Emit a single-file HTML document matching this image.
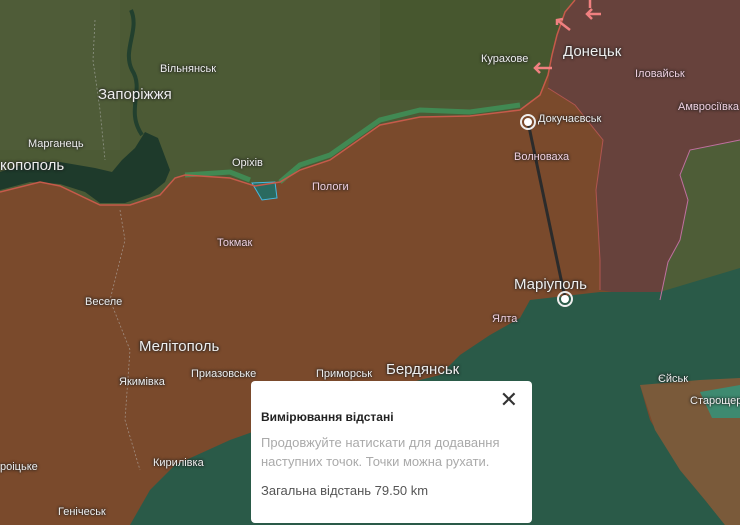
<!DOCTYPE html>
<html><head><meta charset="utf-8"><style>
html,body{margin:0;padding:0;width:740px;height:525px;overflow:hidden;background:#4b5a34}
.l{position:absolute;font-family:"Liberation Sans","DejaVu Sans",sans-serif;color:#eee;font-size:11px;white-space:nowrap;text-shadow:0 0 2px #222,0 0 3px #222}
.b{font-size:15px}
.p{color:#f0d0e0}
.pop{position:absolute;left:251px;top:381px;width:281px;height:142px;background:#fff;border-radius:4px;font-family:"Liberation Sans","DejaVu Sans",sans-serif}
</style></head><body>
<svg width="740" height="525" style="position:absolute;left:0;top:0">
<rect width="740" height="525" fill="#4c5a35"/>
<rect x="380" y="0" width="180" height="100" fill="#47572f"/>
<rect x="0" y="0" width="120" height="150" fill="#4f5c38"/>
<!-- occupied brown -->
<polygon fill="#7a4a2c" points="0,192 40,182 60,186 100,205 130,205 160,195 175,178 185,175 230,178 255,186 280,182 300,170 330,160 380,125 420,117 470,116 520,110 540,95 548,75 552,55 557,35 565,12 575,0 740,0 740,525 0,525"/>
<!-- DPR darker purple -->
<polygon fill="#67423c" points="575,0 740,0 740,140 690,150 680,175 688,200 680,240 668,262 660,300 600,290 600,260 596,190 603,140 575,105 548,88 552,55 557,35 565,12"/>
<!-- russia green -->
<polygon fill="#4e5d37" points="740,140 690,150 680,175 688,200 680,240 668,262 660,300 740,300"/>
<!-- Kakhovka reservoir -->
<polygon fill="#1e3a2b" points="0,172 30,162 60,162 95,168 112,172 122,160 135,148 145,132 158,138 170,170 165,182 150,194 125,203 100,203 85,192 60,184 30,182 0,190"/>
<path d="M131,10 C140,30 122,50 132,70 C145,90 125,110 142,135" stroke="#22402e" stroke-width="4" fill="none"/>
<!-- sea -->
<polygon fill="#2a5a48" points="530,300 600,292 660,292 740,268 740,380 700,382 660,388 640,385 650,420 680,470 705,500 725,525 130,525 150,490 175,465 230,440 300,415 380,390 440,375 460,355 490,335 520,318"/>
<polygon fill="#7a5a3a" points="640,385 700,380 740,378 740,525 725,525 705,500 680,470 655,430"/>
<polygon fill="#3e8a70" points="700,392 740,385 740,418 712,418"/>
<!-- front line green -->
<path d="M185,175 L230,172 L250,180 M280,182 L300,165 L330,155 L380,120 L420,110 L470,112 L520,105" stroke="#3aa868" stroke-width="5" fill="none" opacity=".6"/>
<polygon fill="#2a6a60" stroke="#45b8e0" stroke-width="1" points="252,183 275,182 277,198 262,200"/>
<!-- frontline red -->
<path d="M0,192 L40,182 L60,186 L100,205 L130,205 L160,195 L175,178 L185,175 L230,178 L255,186 L280,182 L300,170 L330,160 L380,125 L420,117 L470,116 L520,110 L540,95 L548,75 L552,55 L557,35 L565,12 L575,0" stroke="#c65a4a" stroke-width="1.5" fill="none"/>
<path d="M548,88 L575,105 L603,140 L596,190 L600,260 L600,290" stroke="#b05550" stroke-width="1" fill="none"/>
<path d="M740,140 L690,150 L680,175 L688,200 L680,240 L668,262 L660,300" stroke="#c070a0" stroke-width="1" fill="none"/>
<g stroke="#f08080" stroke-width="2.5" fill="none">
<path d="M535,68 L552,68 M540,63 L535,68 L540,73"/>
<path d="M557,20 L570,30 M557,25 L557,20 L563,19"/>
<path d="M587,14 L601,14 M592,9 L587,14 L592,19"/>
<path d="M590,0 L590,8"/>
</g>
<path d="M95,20 L93,60 L100,110 L105,160 M120,210 L125,240 L110,300 L130,350 L125,420 L140,470" stroke="#bbb" stroke-dasharray="2,2" stroke-width=".8" fill="none" opacity=".6"/>
<line x1="528" y1="122" x2="565" y2="298" stroke="#2b2b2b" stroke-width="3"/>
<circle cx="528" cy="122" r="7" fill="none" stroke="#eee" stroke-width="2"/><circle cx="528" cy="122" r="4" fill="#fff"/>
<circle cx="565" cy="299" r="7" fill="none" stroke="#eee" stroke-width="2"/><circle cx="565" cy="299" r="4" fill="#fff"/>
</svg>
<div class="l" style="left:160px;top:63px">Вільнянськ</div>
<div class="l b" style="left:98px;top:86px">Запоріжжя</div>
<div class="l" style="left:28px;top:138px">Марганець</div>
<div class="l b" style="left:0;top:157px">копополь</div>
<div class="l" style="left:232px;top:157px">Оріхів</div>
<div class="l p" style="left:312px;top:181px">Пологи</div>
<div class="l p" style="left:217px;top:237px">Токмак</div>
<div class="l" style="left:481px;top:53px">Курахове</div>
<div class="l b" style="left:563px;top:43px">Донецьк</div>
<div class="l p" style="left:635px;top:68px">Іловайськ</div>
<div class="l p" style="left:678px;top:101px">Амвросіївка</div>
<div class="l" style="left:538px;top:113px">Докучаєвськ</div>
<div class="l p" style="left:514px;top:151px">Волноваха</div>
<div class="l b" style="left:514px;top:276px">Маріуполь</div>
<div class="l p" style="left:492px;top:313px">Ялта</div>
<div class="l" style="left:85px;top:296px">Веселе</div>
<div class="l b" style="left:139px;top:338px">Мелітополь</div>
<div class="l" style="left:191px;top:368px">Приазовське</div>
<div class="l" style="left:316px;top:368px">Приморськ</div>
<div class="l b" style="left:386px;top:361px">Бердянськ</div>
<div class="l" style="left:119px;top:376px">Якимівка</div>
<div class="l" style="left:153px;top:457px">Кирилівка</div>
<div class="l" style="left:0;top:461px">роіцьке</div>
<div class="l" style="left:58px;top:506px">Генічеськ</div>
<div class="l" style="left:658px;top:373px">Єйськ</div>
<div class="l" style="left:690px;top:395px">Старощер</div>
<div class="pop">
<div style="position:absolute;right:14px;top:6px;font-size:22px;color:#333">✕</div>
<div style="position:absolute;left:10px;top:29px;font-size:12px;font-weight:bold;color:#222">Вимірювання відстані</div>
<div style="position:absolute;left:10px;top:52px;font-size:13px;color:#aaa;line-height:19px">Продовжуйте натискати для додавання<br>наступних точок. Точки можна рухати.</div>
<div style="position:absolute;left:10px;top:102px;font-size:13px;color:#555">Загальна відстань 79.50 km</div>
</div>
</body></html>
